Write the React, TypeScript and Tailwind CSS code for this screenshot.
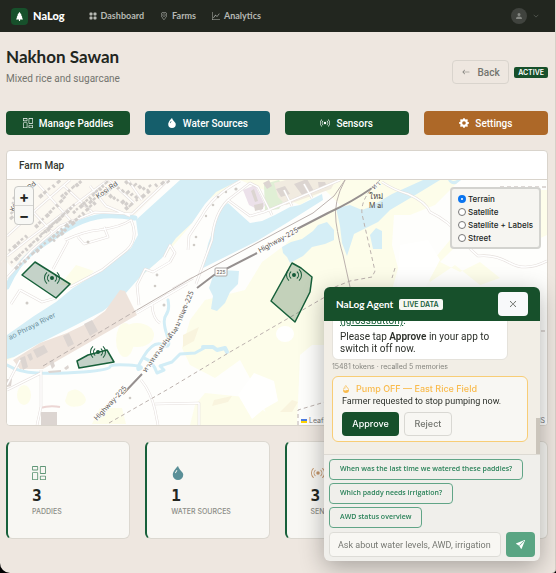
import type { ReactNode } from 'react';
import {
  BsArrowLeft,
  BsBroadcast,
  BsChevronDown,
  BsColumnsGap,
  BsDropletFill,
  BsDropletHalf,
  BsGearFill,
  BsGeoAlt,
  BsGraphUp,
  BsGridFill,
  BsPersonFill,
  BsSendFill,
  BsTreeFill,
  BsXLg,
} from 'react-icons/bs';

const NAV_LINKS = [
  { label: 'Dashboard', icon: <BsGridFill className="h-2 w-2" /> },
  { label: 'Farms', icon: <BsGeoAlt className="h-2 w-2" /> },
  { label: 'Analytics', icon: <BsGraphUp className="h-2 w-2" /> },
];

const ACTIONS = [
  { label: 'Manage Paddies', color: 'bg-[#17502b]', icon: <BsColumnsGap className="h-2.5 w-2.5" /> },
  { label: 'Water Sources', color: 'bg-[#155e6b]', icon: <BsDropletFill className="h-2.5 w-2.5" /> },
  { label: 'Sensors', color: 'bg-[#17502b]', icon: <BsBroadcast className="h-2.5 w-2.5" /> },
  { label: 'Settings', color: 'bg-[#ad6828]', icon: <BsGearFill className="h-2.5 w-2.5" /> },
];

const STATS = [
  { value: '3', label: 'Paddies', icon: <BsColumnsGap className="h-3.5 w-3.5 text-[#5f9676]" /> },
  { value: '1', label: 'Water Sources', icon: <BsDropletFill className="h-3.5 w-3.5 text-[#5a8f97]" /> },
  { value: '3', label: 'Sensors', icon: <BsBroadcast className="h-3.5 w-3.5 text-[#c4956a]" /> },
  { value: '0', label: 'Alerts', icon: <BsGearFill className="h-3.5 w-3.5 text-[#5f9676]" /> },
];

const LAYERS = ['Terrain', 'Satellite', 'Satellite + Labels', 'Street'];

const SUGGESTIONS = [
  'When was the last time we watered these paddies?',
  'Which paddy needs irrigation?',
  'AWD status overview',
];

const FIELDS = [
  { points: '35,262 70,284 56,298 22,275', x: 52, y: 278 },
  { points: '77,361 88,355 107,350 114,362 79,368', x: 98, y: 352 },
  { points: '292,263 301,268 312,277 310,292 295,322 271,301', x: 294, y: 275 },
];

// Rows of houses: start point, end point and number of buildings
const HOUSE_ROWS = [
  [10, 262, 60, 216, 15],
  [14, 268, 68, 222, 14],
  [34, 226, 62, 198, 9],
  [40, 234, 72, 205, 10],
  [52, 240, 92, 203, 12],
  [38, 196, 56, 182, 5],
  [60, 196, 78, 182, 6],
  [72, 212, 104, 183, 11],
  [84, 205, 108, 188, 7],
  [104, 194, 128, 206, 7],
  [112, 186, 134, 197, 6],
  [124, 182, 146, 190, 6],
  [8, 250, 24, 236, 5],
  [9, 218, 12, 198, 5],
  [124, 208, 146, 192, 5],
  [148, 186, 166, 182, 4],
];

const ROADS = [
  'M7 236L40 206 70 180M7 256L30 238 108 180M7 278L32 250 60 226 95 212 132 214 168 180M22 200l30 32M38 184l36 40M64 186l28 26M90 186l16 20 24 10M110 181l24 22M128 180l14 20',
  'M65 240q20-9 34-10 22-3 32-10 8 18-4 30L102 270 70 287M68 241l-15 28M78 237l6 7 24-7-4-10',
  'M228 200L250 216 264 212 340 180M228 200l22-17 8 4 14 28M228 200Q214 214 212 240L196 284M240 181Q212 196 202 216L189 236 188 250M284 190l8 16M304 184l8 14M193 278l-20 11M170 262l-17 10-8-3-8 16 2 20M170 262l5-9-5-8-6 12',
  'M382 182q12 8 26 12 18 8 22 18 20 10 28 22t20 22q16-2 32 7t37-2',
  'M41 370V407L37 425M41 373L7 390M20 360L7 385M137 313L187 284M152 305q1 14 8 18M168 294l-12 8M20 290l-9 14M20 290l22 12 14-4M141 380q10 12 14 30l3 15M155 404l44-1v22',
];

function houses() {
  const out: ReactNode[] = [];
  HOUSE_ROWS.forEach(([x1, y1, x2, y2, count], row) => {
    for (let i = 0; i < count; i++) {
      const t = i / (count - 1);
      const x = x1 + (x2 - x1) * t;
      const y = y1 + (y2 - y1) * t;
      const w = 2.4 + ((i * 7 + row * 3) % 4) * 0.6;
      const h = 2.4 + ((i * 5 + row) % 3) * 0.7;
      out.push(
        <rect
          key={`${row}-${i}`}
          x={x}
          y={y}
          width={w}
          height={h}
          transform={`rotate(-42 ${x} ${y})`}
        />
      );
    }
  });
  return out;
}

function FarmMap() {
  return (
    <svg
      viewBox="7 180 540 245"
      preserveAspectRatio="xMidYMid slice"
      className="block h-full w-full"
      role="img"
      aria-label="Farm map"
      fontFamily="Inter, sans-serif"
    >
      <rect x="7" y="180" width="540" height="245" fill="#fefefc" />

      {/* Farmland */}
      <g fill="#fdfdea">
        <path d="M240 180H460L435 205 410 215 394 215 392 245 398 268 392 290H330V345H312L300 355 297 425H270L262 402 250 412 238 400 252 382 240 360 215 378 190 365 182 348 190 320 205 300 245 290 262 262 285 245 300 228 340 205 325 190 300 205Z" />
        <path d="M547 205V235L530 243 515 230 505 240 490 225 470 232 440 262 460 272 480 262 500 278 480 285 455 265 430 282 425 270 450 240 470 190H547Z" />
        <ellipse cx="137" cy="335" rx="17" ry="12" />
        <ellipse cx="125" cy="340" rx="9" ry="17" />
        <ellipse cx="24" cy="395" rx="7" ry="10" />
        <path d="M68 392q8-6 15 2t-3 12q-12 3-15-5zM100 408h22l4 16H92zM60 285h20l14-14-18-6z" />
        <path d="M190 425l5-20 10-12 40 4 22 16 6 12z" />
        <path d="M7 361L43 341 103 308 133 284 168 252 190 226 205 202 240 180 216 182 7 345Z" />
      </g>
      <path d="M7 180H170L132 218 95 212 60 224 12 268 7 262Z" fill="#fcf9f2" />
      <g fill="#fffffe">
        <ellipse cx="285" cy="334" rx="9" ry="8" />
        <path d="M238 395l16-22 20 8 4 20-14 8-12 10zM400 245l28-5 12 20-15 28h-28z" />
      </g>
      <path d="M280 412l12-12 6 2-6 10zM214 400l18-4-4 6-16 4zM183 335l16-8-5 14-11 6z" fill="#f9f4de" />

      {/* River and lakes */}
      <g fill="#d5eef6">
        <path d="M180 180H240L216 192 205 204 192 223 176 238 162 258 140 277 125 294 103 311 76 325 38 344 14 357 7 359V335L34 316 56 302 73 288 105 268 131 248 138 235 136 220 148 209Z" />
        <path d="M228 203L240 214 250 223 262 221 275 215 290 207 300 205 322 194 323 200 285 224 257 241 203 268 208 244 214 227 221 208Z" />
        <path d="M283 253L282 247 291 242 302 239 313 231 318 225 327 222 334 230 334 240 325 244 312 247 303 256 290 263 287 257Z" />
        <path d="M336 208L350 205 362 210 370 207 392 194 423 180H440L412 197 390 210 378 222 354 234 347 256 342 243 340 226Z" />
        <path d="M370 235l6-7 6 3v18h-9zM448 180q2 5 8 4l5-4h-4q-4 2-6 0z" />
        <path d="M209 288L213 276 222 270 239 271 238 284 230 292 225 303 217 311 211 309 213 296Z" />
      </g>
      <g fill="none" stroke="#d2edf6" strokeLinecap="round" strokeLinejoin="round">
        <path d="M7 287Q18 262 35 250T67 229 97 217 135 218" strokeWidth="5" />
        <path d="M7 365Q18 372 37 373T83 372 110 367 128 365 140 369 144 356 163 345 167 335 166 315 168 300" strokeWidth="3" />
        <path d="M144 358Q153 361 157 373L164 370 160 366 172 362 180 354 195 353 206 347" strokeWidth="3" />
        <path d="M203 347h10l4 3 8-2 2 4" strokeWidth="4" />
      </g>

      {/* Industrial zone and town blocks */}
      <path d="M120 290L125 291 137 315 43 369 20 369 13 360 40 343 67 333 90 322 105 311Z" fill="#eee3db" />
      <path d="M264 184l15-4 8 15-8 14-14 2z" fill="#e0efd5" />
      <path d="M243 190l12-5 10 20-4 6-12-6z" fill="#ece1ea" />
      <path d="M274 183l20-5 42 2-5 9-45 16-8-8z" fill="#f1ebe0" />
      <g fill="#dcd5d1">
        <path d="M84 324l8-4 6 11-8 5zM63 336l6-3 5 11-6 3zM33 350l11-5 4 7-11 6zM20 358l5-2 3 11-5 3zM27 355l4-2 2 6-3 2z" />
        <path d="M49 361l4-1 2 6-3 3zM48 371l13-1v2l-12 1zM64 368l4-3 1 3-3 2zM41 412h16v13H41zM7 379h5l-1 7-4 1z" />
        <path d="M254 205l9-2v6l-8 2zM276 189l9-3 5 8-9 3zM294 184l13-5 7 12-12 4zM263 183l6-3 3 6-5 3zM318 182h7l2 5-8 2z" />
        <path d="M251 191l3-2 4 12-3 1z" />
      </g>
      <path d="M40 408q10-3 20-1" fill="none" stroke="#ecd6d4" strokeWidth="2" />

      {/* Local roads: casing first, then the white fill */}
      <g fill="none" stroke="#e5dfdc" strokeWidth="2.6" strokeLinejoin="round">
        {ROADS.map((d) => (
          <path key={d} d={d} />
        ))}
      </g>
      <g fill="none" stroke="#ffffff" strokeWidth="1.5" strokeLinejoin="round">
        {ROADS.map((d) => (
          <path key={d} d={d} />
        ))}
      </g>

      <g fill="#d3cfcc">{houses()}</g>
      <g fill="#cfcbc6">
        <circle cx="88" cy="242" r="1.5" />
        <circle cx="194" cy="245" r="1.3" />
        <circle cx="196" cy="237" r="1.3" />
        <circle cx="206" cy="216" r="1.2" />
        <circle cx="213" cy="205" r="1.3" />
        <circle cx="218" cy="197" r="1.3" />
        <circle cx="226" cy="192" r="1.2" />
        <circle cx="236" cy="189" r="1.6" />
        <circle cx="27" cy="303" r="1.5" />
        <circle cx="164" cy="305" r="1.5" />
        <circle cx="130" cy="398" r="1.3" />
        <circle cx="157" cy="275" r="1.4" />
        <circle cx="155" cy="286" r="1.3" />
        <circle cx="161" cy="349" r="1.3" />
      </g>

      {/* Railway and boundaries */}
      <g fill="none" stroke="#bcb2ae" strokeWidth="1">
        <path d="M137 310L190 279 257 243 313 213 334 196 345 180M345 180Q333 202 336 222T343 255L350 287" />
        <path d="M43 366L137 310" strokeDasharray="5 3" />
        <path
          d="M109 423L170 388 230 352 325 297M298 425V410L325 402M380 180q-20 18-18 34l13 57-3 6-22 4-25 10M395 268l-3 10M500 187h47M541 331h6"
          strokeDasharray="4 3"
        />
      </g>

      {/* Highway 225 */}
      <path
        d="M372 188Q352 202 328 213L297 229M257 253L214 275 197 288M142 374L123 394"
        fill="none"
        stroke="#96908f"
        strokeWidth="2"
      />
      <rect x="215" y="268" width="12" height="8" rx="1" fill="#fff" stroke="#a9a5a2" />
      <g fill="#5f5b58" fontSize="7" stroke="#fefefc" strokeWidth="1.5" paintOrder="stroke">
        <text x="216.5" y="274" fontSize="5">225</text>
        <text transform="translate(260 253) rotate(-29)">Highway-225</text>
        <text transform="translate(97 421) rotate(-47)">Highway-225</text>
        <text transform="translate(146 373) rotate(-54)" fontFamily="Noto Sans, sans-serif">
          ทางหลวงแผ่นดิน
        </text>
        <text transform="translate(177 332) rotate(-67)" fontFamily="Noto Sans, sans-serif">
          หมายเลข-225
        </text>
        <text transform="translate(98 199) rotate(-35)">Kosi Rd</text>
        <text transform="translate(14 212) rotate(-65)">Kos</text>
        <text transform="translate(30 190) rotate(-40)">Rd</text>
        <text transform="translate(374 190) rotate(-42)">ทา</text>
      </g>
      <text transform="translate(10 340) rotate(-27)" fill="#6b8f9d" fontSize="7">ao Phraya River</text>
      <g fill="#4c4845" fontSize="7">
        <text x="369" y="199" fontSize="8">ใหม่</text>
        <text x="369" y="208">M ai</text>
      </g>

      {/* Paddies */}
      {FIELDS.map((field) => (
        <g key={field.points}>
          <polygon
            points={field.points}
            fill="#17502b"
            fillOpacity="0.25"
            stroke="#17603a"
            strokeWidth="1.5"
            strokeLinejoin="round"
          />
          <BsBroadcast x={field.x - 8} y={field.y - 8} width={16} height={16} color="#155a38" />
        </g>
      ))}
    </svg>
  );
}

function Navbar() {
  return (
    <header className="flex h-8 items-center bg-[#22261f] pr-4 pl-[11px] font-['Lato',sans-serif] text-[#b7b9b4]">
      <a href="#home" className="flex items-center gap-[5px] text-white">
        <span className="flex h-[17px] w-[17px] items-center justify-center rounded bg-[#17502b]">
          <BsTreeFill className="h-[9px] w-[9px]" />
        </span>
        <span className="text-[11px] font-black">NaLog</span>
      </a>
      <nav className="ml-6 flex gap-4">
        {NAV_LINKS.map((link) => (
          <a
            key={link.label}
            href={`#${link.label.toLowerCase()}`}
            className="flex items-center gap-1 text-[9px] font-bold"
          >
            {link.icon}
            {link.label}
          </a>
        ))}
      </nav>
      <button aria-label="Account" className="ml-auto flex items-center gap-1.5 text-[#6d706a]">
        <span className="flex h-4 w-4 items-center justify-center rounded-full bg-[#40433e] text-[#858883]">
          <BsPersonFill className="h-2 w-2" />
        </span>
        <BsChevronDown className="h-1.5 w-1.5" />
      </button>
    </header>
  );
}

function MapCard() {
  return (
    <section className="mt-[15px] overflow-hidden rounded border border-[#d9d4cc] bg-white">
      <h2 className="flex h-[29px] items-center border-b border-[#d9d4cc] px-3 font-['Roboto',sans-serif] text-[10px] font-medium text-[#33372f]">
        Farm Map
      </h2>
      <div className="relative h-[245px]">
        <FarmMap />
        <div className="absolute top-1.5 left-[7px] flex flex-col overflow-hidden rounded border border-[#c9c9c6] bg-[#f8f8f5] text-[15px] leading-none font-bold text-[#22261f]">
          <button aria-label="Zoom in" className="h-[19px] w-[18px] border-b border-[#d5d5d2]">
            +
          </button>
          <button aria-label="Zoom out" className="h-[18px] w-[18px]">
            −
          </button>
        </div>
        <fieldset className="absolute top-[7px] right-1.5 flex w-[91px] flex-col rounded border-2 border-[#d3d3cf] bg-[#f6f5f1] py-[3px] pl-1.5">
          {LAYERS.map((layer, i) => (
            <label key={layer} className="flex h-[13px] items-center gap-0.5 text-[8px] font-medium whitespace-nowrap text-[#22261f]">
              <input
                type="radio"
                name="layer"
                defaultChecked={i === 0}
                className="h-2 w-2 appearance-none rounded-full border border-[#777] bg-white checked:border-[3px] checked:border-[#0a74f0]"
              />
              {layer}
            </label>
          ))}
        </fieldset>
        <div className="absolute right-0 bottom-0 flex w-[248px] items-center gap-0.5 bg-white/80 px-0.5 text-[7px] leading-[9px] text-[#777]">
          <svg viewBox="0 0 6 4" className="h-1 w-1.5">
            <path fill="#4c7be1" d="M0 0h6v2H0z" />
            <path fill="#ffd500" d="M0 2h6v2H0z" />
          </svg>
          <a href="#leaflet">Leaflet</a>
          <span className="ml-auto">GIS</span>
        </div>
      </div>
    </section>
  );
}

function AgentChat() {
  return (
    <aside className="fixed right-4 bottom-3 w-[216px] overflow-hidden rounded-md bg-[#f0efeb] shadow-[0_6px_24px_rgba(0,0,0,0.3)]">
      <div className="flex h-[34px] items-center bg-[#17502b] px-3 text-white">
        <h2 className="font-['Lato',sans-serif] text-[10px] font-bold">NaLog Agent</h2>
        <span className="ml-1.5 rounded-xs bg-[#f6f7f3] px-1 text-[7px] leading-[11px] font-semibold text-[#17603a]">
          LIVE DATA
        </span>
        <button
          aria-label="Close"
          className="ml-auto flex h-6 w-[30px] items-center justify-center rounded bg-[#f8f9fa] text-[#33372f]"
        >
          <BsXLg className="h-2 w-2" />
        </button>
      </div>

      <div className="relative flex h-[133px] flex-col justify-end overflow-hidden bg-[#f2eee6] pr-3 pb-3 pl-2">
        <div className="w-[176px] rounded-md rounded-t-none border border-[#e5e2db] bg-white px-[7px] pb-1 font-['Roboto',sans-serif] text-[10px] leading-3 text-[#2c302a]">
          <p className="mb-1 text-[#17603a]">
            <span className="underline">(jgfossbutton)</span>.
          </p>
          <p>
            Please tap <strong className="font-semibold">Approve</strong> in your app to switch it off now.
          </p>
        </div>
        <p className="text-[7px] leading-[14px] text-[#85857f]">15481 tokens · recalled 5 memories</p>
        <div className="mt-0.5 rounded-md border border-[#f8cd76] bg-[#f8f7f3] px-[9px] pt-1.5 pb-[5px]">
          <h3 className="flex items-center gap-1.5 text-[9px] leading-3 font-medium text-[#f9bb4d]">
            <BsDropletHalf className="h-2 w-2" />
            Pump OFF — East Rice Field
          </h3>
          <p className="font-['Roboto',sans-serif] text-[9px] leading-[13px] text-[#2c302a]">
            Farmer requested to stop pumping now.
          </p>
          <div className="mt-1 flex gap-[5px] text-[9px] font-medium">
            <button className="h-6 w-[57px] rounded bg-[#17502b] text-white">Approve</button>
            <button className="h-6 w-12 rounded border border-[#d9d8d3] text-[#71736d]">Reject</button>
          </div>
        </div>
        <div className="absolute right-0 bottom-0 h-9 w-1 bg-[#cbc5bb]" />
      </div>

      <div className="border-t border-[#dddad3] px-[5px] pt-1 pb-1">
        <div className="flex flex-col items-start gap-[3px]">
          {SUGGESTIONS.map((text) => (
            <button
              key={text}
              className="h-[21px] rounded border border-[#61a587] px-2.5 font-['Open_Sans',sans-serif] text-[7px] font-semibold whitespace-nowrap text-[#2a8259]"
            >
              {text}
            </button>
          ))}
        </div>
        <form className="mt-1 flex gap-[5px]" onSubmit={(e) => e.preventDefault()}>
          <input
            type="text"
            aria-label="Message"
            placeholder="Ask about water levels, AWD, irrigation"
            className="h-[25px] min-w-0 flex-1 rounded border border-[#dddcd7] bg-[#f8f7f3] px-2 font-['Roboto',sans-serif] text-[9px] placeholder:text-[#777973]"
          />
          <button aria-label="Send" className="flex h-[25px] w-[29px] items-center justify-center rounded bg-[#5aa583] text-white">
            <BsSendFill className="h-[9px] w-[9px]" />
          </button>
        </form>
      </div>
    </aside>
  );
}

export default function App() {
  return (
    <div className="bg-black font-['Inter',sans-serif]">
      <div className="min-h-screen overflow-hidden rounded-br-[4px] rounded-bl-[10px] border-r border-[#d8d0c8] bg-[#eee7e0]">
        <Navbar />
        <main className="pr-[7px] pb-8 pl-1.5">
          <div className="flex items-center justify-between pt-[13px]">
            <div>
              <h1 className="font-['Lato',sans-serif] text-[17px] leading-6 font-bold text-[#22261f]">Nakhon Sawan</h1>
              <p className="mt-0.5 font-['Roboto',sans-serif] text-[10px] leading-4 text-[#73746e]">
                Mixed rice and sugarcane
              </p>
            </div>
            <div className="mt-3 flex items-center gap-[5px]">
              <button className="flex h-6 w-[57px] items-center justify-center gap-2 rounded border border-[#d9d4cd] font-['Roboto',sans-serif] text-[10px] font-medium text-[#73746e]">
                <BsArrowLeft className="h-2 w-2" />
                Back
              </button>
              <span className="rounded-xs bg-[#17502b] px-1 text-[7px] leading-[11px] font-semibold text-white">
                ACTIVE
              </span>
            </div>
          </div>

          <div className="mt-6 grid grid-cols-4 gap-[15px]">
            {ACTIONS.map((action) => (
              <button
                key={action.label}
                className={`flex h-6 items-center justify-center gap-1.5 rounded font-['Roboto',sans-serif] text-[10px] font-medium text-white ${action.color}`}
              >
                {action.icon}
                {action.label}
              </button>
            ))}
          </div>

          <MapCard />

          <div className="mt-[15px] grid grid-cols-4 gap-[15px]">
            {STATS.map((stat) => (
              <div
                key={stat.label}
                className="h-[98px] rounded-md border border-l-2 border-[#dcd8d0] border-l-[#17603a] bg-[#f8f7f3] pt-6 pl-6"
              >
                {stat.icon}
                <p className="mt-[7px] font-['DejaVu_Sans_Mono',monospace] text-[16px] leading-[18px] font-bold text-[#22261f]">
                  {stat.value}
                </p>
                <p className="mt-0.5 text-[7px] leading-[9px] font-medium text-[#8b8c86] uppercase">{stat.label}</p>
              </div>
            ))}
          </div>
        </main>
      </div>
      <AgentChat />
    </div>
  );
}
